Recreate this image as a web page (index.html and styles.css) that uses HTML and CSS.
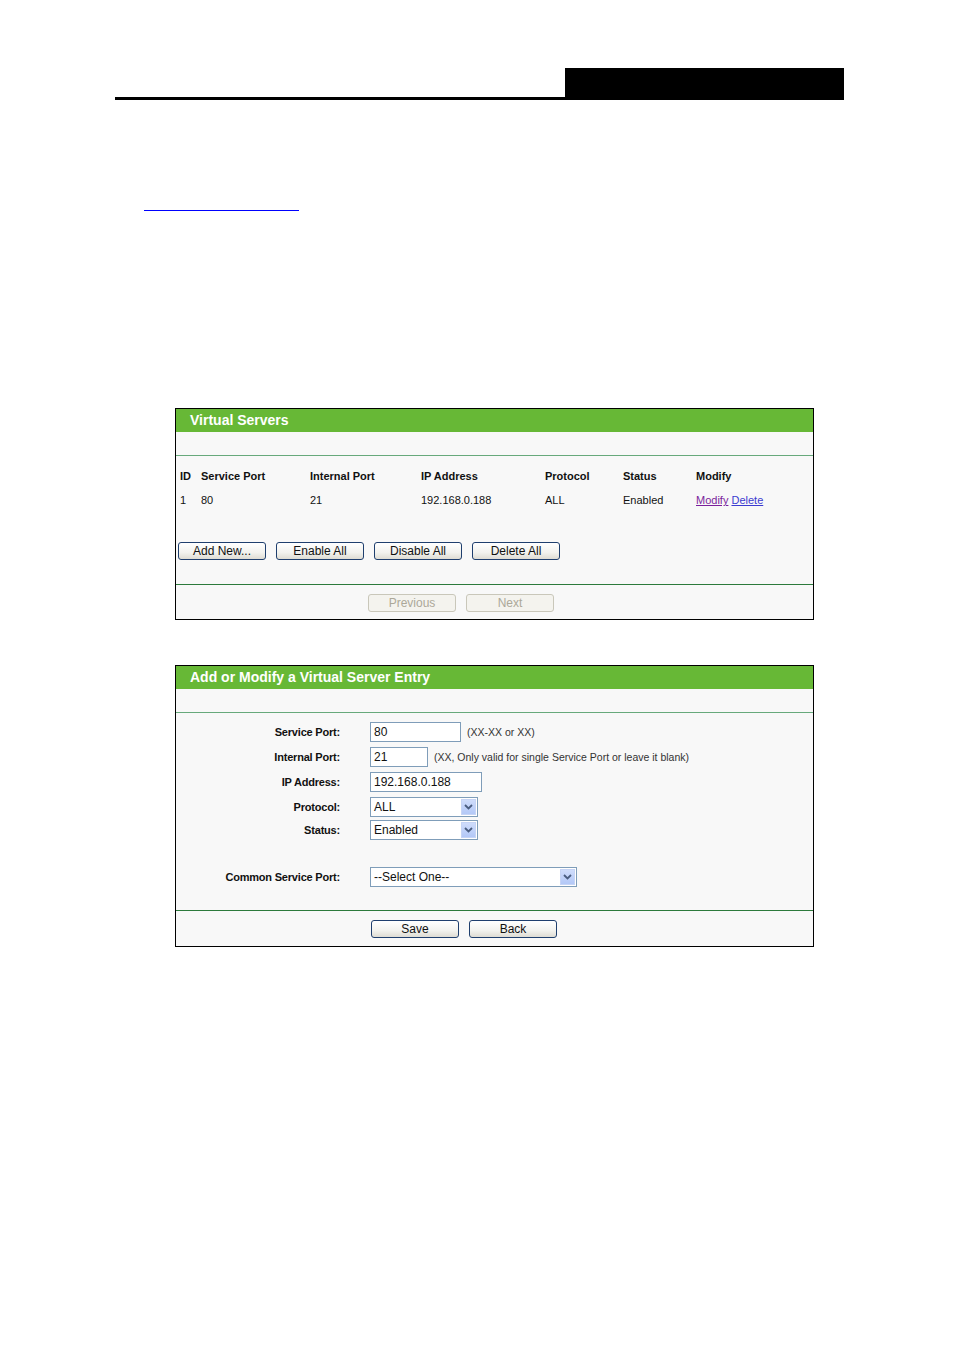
FILE: index.html
```
<!DOCTYPE html>
<html lang="en">
<head>
    <meta charset="UTF-8">
    <title>Virtual Servers</title>
    <link rel="stylesheet" href="styles.css">
</head>
<body>
    <div class="page-head">
        <div class="page-head-box"></div>
    </div>
    <div class="page-link"><a href="#" class="blank-link">&nbsp;</a></div>

    <!-- list of virtual servers -->
    <div class="panel panel-list">
        <div class="panel-title">Virtual Servers</div>
        <div class="panel-gap"></div>
        <div class="panel-body">
            <div class="vs-row vs-head">
                <span>ID</span>
                <span>Service Port</span>
                <span>Internal Port</span>
                <span>IP Address</span>
                <span>Protocol</span>
                <span>Status</span>
                <span>Modify</span>
            </div>
            <div class="vs-row">
                <span>1</span>
                <span>80</span>
                <span>21</span>
                <span>192.168.0.188</span>
                <span>ALL</span>
                <span>Enabled</span>
                <span><a href="#" class="lnk-modify">Modify</a> <a href="#" class="lnk-delete">Delete</a></span>
            </div>
            <div class="btn-row">
                <button class="btn">Add New...</button>
                <button class="btn">Enable All</button>
                <button class="btn">Disable All</button>
                <button class="btn">Delete All</button>
            </div>
        </div>
        <div class="panel-foot">
            <button class="btn" disabled>Previous</button>
            <button class="btn" disabled>Next</button>
        </div>
    </div>

    <!-- add / modify form -->
    <div class="panel panel-form">
        <div class="panel-title">Add or Modify a Virtual Server Entry</div>
        <div class="panel-gap"></div>
        <div class="panel-body form-body">
            <div class="f-row">
                <label>Service Port:</label>
                <div class="f-field"><div class="txt w-svc">80</div><span class="hint">(XX-XX or XX)</span></div>
            </div>
            <div class="f-row">
                <label>Internal Port:</label>
                <div class="f-field"><div class="txt w-int">21</div><span class="hint">(XX, Only valid for single Service Port or leave it blank)</span></div>
            </div>
            <div class="f-row">
                <label>IP Address:</label>
                <div class="f-field"><div class="txt w-ip">192.168.0.188</div></div>
            </div>
            <div class="f-row">
                <label>Protocol:</label>
                <div class="f-field"><div class="sel w-sel"><span>ALL</span><i class="sel-arrow"><svg width="9" height="6" viewBox="0 0 9 6"><path d="M1 1 L4.5 4.5 L8 1" fill="none" stroke="#4a5d80" stroke-width="1.8"/></svg></i></div></div>
            </div>
            <div class="f-row row-status">
                <label>Status:</label>
                <div class="f-field"><div class="sel w-sel"><span>Enabled</span><i class="sel-arrow"><svg width="9" height="6" viewBox="0 0 9 6"><path d="M1 1 L4.5 4.5 L8 1" fill="none" stroke="#4a5d80" stroke-width="1.8"/></svg></i></div></div>
            </div>
            <div class="f-row row-common">
                <label>Common Service Port:</label>
                <div class="f-field"><div class="sel w-common"><span>--Select One--</span><i class="sel-arrow"><svg width="9" height="6" viewBox="0 0 9 6"><path d="M1 1 L4.5 4.5 L8 1" fill="none" stroke="#4a5d80" stroke-width="1.8"/></svg></i></div></div>
            </div>
        </div>
        <div class="panel-foot foot-form">
            <button class="btn">Save</button>
            <button class="btn">Back</button>
        </div>
    </div>
</body>
</html>
```

FILE: styles.css
```
body {
    margin: 0;
    background: #fff;
    font-family: "Liberation Sans", Arial, sans-serif;
    color: #000;
    width: 954px;
}

.page-head {
    margin: 68px 0 0 115px;
    width: 729px;
    border-bottom: 3px solid #000;
    display: flex;
    justify-content: flex-end;
}

.page-head-box {
    width: 279px;
    height: 29px;
    background: #000;
}

.page-link {
    margin: 98px 0 0 144px;
    height: 12px;
    line-height: 12px;
}

.blank-link {
    display: inline-block;
    width: 155px;
    border-bottom: 1px solid #0000ff;
    text-decoration: none;
}

.panel {
    margin-left: 175px;
    width: 637px;
    border: 1px solid #000;
    background: #f8f8f8;
}

.panel-list {
    margin-top: 198px;
}

.panel-form {
    margin-top: 45px;
}

.panel-title {
    height: 23px;
    line-height: 23px;
    background: #67b836;
    color: #fff;
    font-size: 14px;
    font-weight: bold;
    padding-left: 14px;
}

.panel-gap {
    height: 23px;
    border-bottom: 1px solid #67a97b;
}

.panel-body {
    padding: 8px 0 24px 4px;
    border-bottom: 1px solid #2c7a3c;
}

.vs-row {
    display: grid;
    grid-template-columns: 21px 109px 111px 124px 78px 73px 1fr;
    height: 24px;
    align-items: center;
    font-size: 11px;
    color: #111;
}

.vs-head {
    font-weight: bold;
}

.lnk-modify {
    color: #7b1f9c;
}

.lnk-delete {
    color: #3b3bd0;
}

.btn-row {
    display: flex;
    gap: 10px;
    margin-top: 30px;
    margin-left: -2px;
}

.btn {
    width: 88px;
    height: 18px;
    padding: 0;
    border: 1px solid #1f3f6e;
    border-radius: 3px;
    background: linear-gradient(#ffffff, #f2f2ee 60%, #dedcd3);
    font-family: "Liberation Sans", Arial, sans-serif;
    font-size: 12px;
    color: #111;
    line-height: 16px;
}

.btn:disabled {
    border-color: #c9c7ba;
    background: #f4f3ee;
    color: #aca899;
}

.panel-foot {
    height: 34px;
    display: flex;
    align-items: flex-start;
    gap: 10px;
    padding: 9px 0 0 192px;
    box-sizing: border-box;
}

/* form */
.form-body {
    padding: 9px 0 23px 0;
    display: flex;
    flex-direction: column;
    gap: 5px;
}

.f-row {
    display: flex;
    align-items: center;
    height: 20px;
}

.f-row label {
    width: 164px;
    text-align: right;
    font-size: 11px;
    font-weight: bold;
    letter-spacing: -0.2px;
    color: #111;
    margin-right: 30px;
}

.row-status {
    margin-top: -2px;
}

.row-common {
    margin-top: 22px;
}

.f-field {
    display: flex;
    align-items: center;
}

.txt, .sel {
    height: 20px;
    box-sizing: border-box;
    border: 1px solid #7f9db9;
    background: #fff;
    font-size: 12px;
    color: #111;
    padding-left: 3px;
    line-height: 18px;
}

.w-svc { width: 91px; }
.w-int { width: 58px; }
.w-ip { width: 112px; }
.w-sel { width: 108px; }
.w-common { width: 207px; }

.hint {
    font-size: 10.5px;
    color: #333;
    margin-left: 6px;
}

.sel {
    display: flex;
    justify-content: space-between;
    align-items: center;
    padding-right: 1px;
}

.sel-arrow {
    width: 15px;
    height: 16px;
    background: linear-gradient(#cfdcfb, #b3c8f7);
    border: 1px solid #c6d4f5;
    box-sizing: border-box;
    display: flex;
    align-items: center;
    justify-content: center;
}

.foot-form {
    height: 35px;
    padding-left: 195px;
}
```
